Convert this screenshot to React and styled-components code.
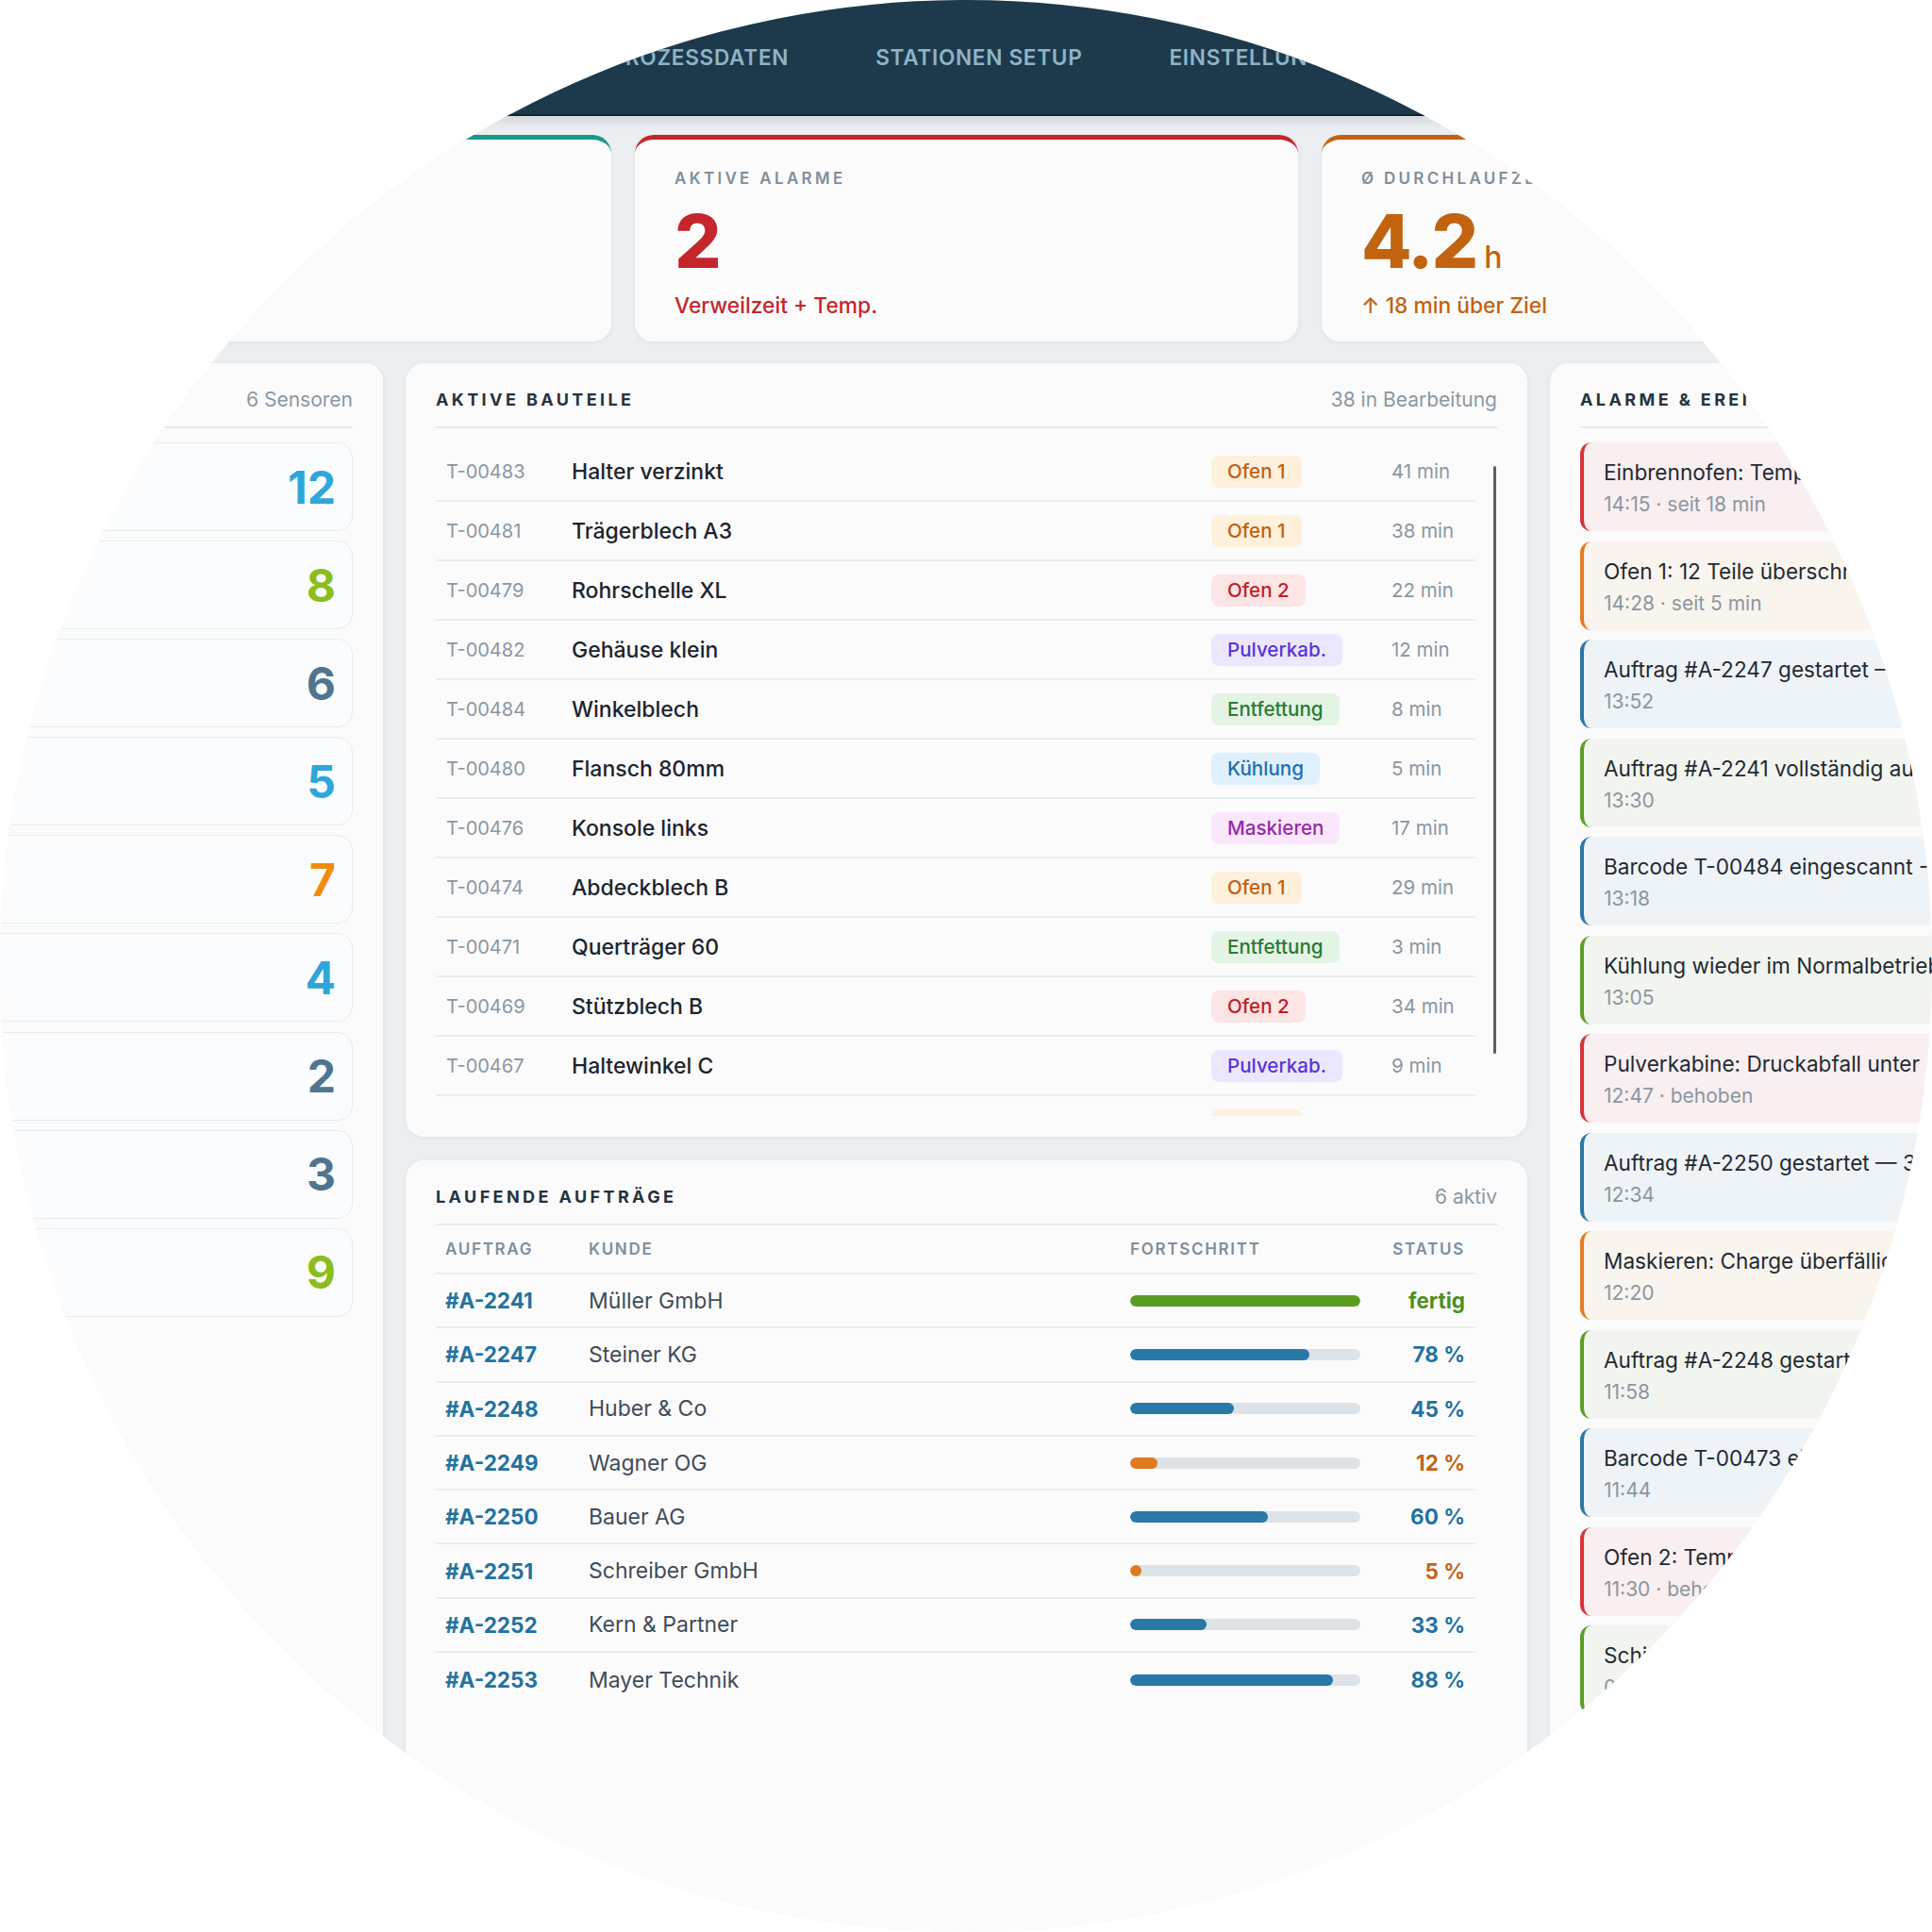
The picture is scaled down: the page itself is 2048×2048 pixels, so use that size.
import React from 'react';
import styled, { createGlobalStyle } from 'styled-components';

const GlobalStyle = createGlobalStyle`
  html, body {
    margin: 0;
    padding: 0;
    background: #ffffff;
  }
  body {
    font-family: Inter, "Noto Sans", sans-serif;
    color: #1f2a33;
  }
  * {
    box-sizing: border-box;
  }
`;

const colors = {
  navy: '#1c3a4b',
  navText: '#8db4c9',
  pageBg: '#eceff2',
  panel: '#fbfbfc',
  line: '#e6eaed',
  title: '#26323c',
  muted: '#8a97a1',
  label: '#7f8e99',
  red: '#c4262c',
  orange: '#c2630f',
  teal: '#17998a',
  blue: '#22729f',
  green: '#4f8e1d'
};

const STAGES = {
  ofen1: { label: 'Ofen 1', bg: '#fff0dc', fg: '#c2600c' },
  ofen2: { label: 'Ofen 2', bg: '#fde5e5', fg: '#bf1d27' },
  pulver: { label: 'Pulverkab.', bg: '#ece7ff', fg: '#5a34d6' },
  entf: { label: 'Entfettung', bg: '#e3f4e5', fg: '#2a7a34' },
  kuehl: { label: 'Kühlung', bg: '#dff0fd', fg: '#1c6fb0' },
  mask: { label: 'Maskieren', bg: '#fbe7fc', fg: '#962aa6' }
};

const TONES = {
  red: { edge: '#d6343a', bg: '#f9eef0' },
  orange: { edge: '#e57c1c', bg: '#faf4ee' },
  blue: { edge: '#2a78a6', bg: '#eef3f7' },
  green: { edge: '#5c9e26', bg: '#f2f5ef' }
};

const BAR = {
  blue: { fill: '#2878a8', text: '#22729f' },
  green: { fill: '#5b9b22', text: '#4f8e1d' },
  orange: { fill: '#e07a1f', text: '#c5641a' }
};

const tabs = ['Übersicht', 'Prozessdaten', 'Stationen Setup', 'Einstellungen'];

const kpis = [
  { label: 'Teile in Linie', value: '38', unit: '', note: '+4 seit Schichtbeginn', color: colors.teal },
  { label: 'Aktive Alarme', value: '2', unit: '', note: 'Verweilzeit + Temp.', color: colors.red },
  { label: 'Ø Durchlaufzeit', value: '4.2', unit: 'h', note: '↑ 18 min über Ziel', color: colors.orange }
];

const sensors = [
  { value: 12, color: '#2fa6da' },
  { value: 8, color: '#8bbd1c' },
  { value: 6, color: '#4f7590' },
  { value: 5, color: '#2fa6da' },
  { value: 7, color: '#f28c0c' },
  { value: 4, color: '#2fa6da' },
  { value: 2, color: '#4f7590' },
  { value: 3, color: '#4f7590' },
  { value: 9, color: '#8bbd1c' }
];

const parts = [
  ['T-00483', 'Halter verzinkt', 'ofen1', 41],
  ['T-00481', 'Trägerblech A3', 'ofen1', 38],
  ['T-00479', 'Rohrschelle XL', 'ofen2', 22],
  ['T-00482', 'Gehäuse klein', 'pulver', 12],
  ['T-00484', 'Winkelblech', 'entf', 8],
  ['T-00480', 'Flansch 80mm', 'kuehl', 5],
  ['T-00476', 'Konsole links', 'mask', 17],
  ['T-00474', 'Abdeckblech B', 'ofen1', 29],
  ['T-00471', 'Querträger 60', 'entf', 3],
  ['T-00469', 'Stützblech B', 'ofen2', 34],
  ['T-00467', 'Haltewinkel C', 'pulver', 9],
  ['T-00466', 'Distanzblech', 'ofen1', 44]
];

const orders = [
  { id: '#A-2241', customer: 'Müller GmbH', progress: 100, tone: 'green' },
  { id: '#A-2247', customer: 'Steiner KG', progress: 78, tone: 'blue' },
  { id: '#A-2248', customer: 'Huber & Co', progress: 45, tone: 'blue' },
  { id: '#A-2249', customer: 'Wagner OG', progress: 12, tone: 'orange' },
  { id: '#A-2250', customer: 'Bauer AG', progress: 60, tone: 'blue' },
  { id: '#A-2251', customer: 'Schreiber GmbH', progress: 5, tone: 'orange' },
  { id: '#A-2252', customer: 'Kern & Partner', progress: 33, tone: 'blue' },
  { id: '#A-2253', customer: 'Mayer Technik', progress: 88, tone: 'blue' }
];

const events = [
  { tone: 'red', text: 'Einbrennofen: Temperatur über Sollwert (218 °C)', meta: '14:15 · seit 18 min' },
  { tone: 'orange', text: 'Ofen 1: 12 Teile überschreiten Verweilzeit', meta: '14:28 · seit 5 min' },
  { tone: 'blue', text: 'Auftrag #A-2247 gestartet – 24 Teile', meta: '13:52' },
  { tone: 'green', text: 'Auftrag #A-2241 vollständig ausgeliefert', meta: '13:30' },
  { tone: 'blue', text: 'Barcode T-00484 eingescannt - Entfettung', meta: '13:18' },
  { tone: 'green', text: 'Kühlung wieder im Normalbetrieb', meta: '13:05' },
  { tone: 'red', text: 'Pulverkabine: Druckabfall unter 4 bar', meta: '12:47 · behoben' },
  { tone: 'blue', text: 'Auftrag #A-2250 gestartet — 30 Teile', meta: '12:34' },
  { tone: 'orange', text: 'Maskieren: Charge überfällig', meta: '12:20' },
  { tone: 'green', text: 'Auftrag #A-2248 gestartet', meta: '11:58' },
  { tone: 'blue', text: 'Barcode T-00473 eingescannt', meta: '11:44' },
  { tone: 'red', text: 'Ofen 2: Temperaturschwankung', meta: '11:30 · behoben' },
  { tone: 'green', text: 'Schichtwechsel abgeschlossen', meta: '06:00' }
];

const App = () => (
  <>
    <GlobalStyle />
    <Viewport>
      <Page>
        <NavBar>
          <Brand>PULVERLINIE</Brand>
          <Tabs>
            {tabs.map(tab => (
              <Tab key={tab}>{tab}</Tab>
            ))}
          </Tabs>
        </NavBar>

        <Main>
          <KpiRow>
            {kpis.map(kpi => (
              <KpiCard key={kpi.label} $accent={kpi.color}>
                <KpiLabel>{kpi.label}</KpiLabel>
                <KpiValue $color={kpi.color}>
                  {kpi.value}
                  {kpi.unit && <KpiUnit>{kpi.unit}</KpiUnit>}
                </KpiValue>
                <KpiNote $color={kpi.color}>{kpi.note}</KpiNote>
              </KpiCard>
            ))}
          </KpiRow>

          <Body>
            <Panel>
              <PanelHeader>
                <PanelTitle>Stationen</PanelTitle>
                <PanelMeta>6 Sensoren</PanelMeta>
              </PanelHeader>
              <SensorList>
                {sensors.map((sensor, i) => (
                  <SensorCard key={i}>
                    <SensorValue $color={sensor.color}>{sensor.value}</SensorValue>
                  </SensorCard>
                ))}
              </SensorList>
            </Panel>

            <CenterColumn>
              <Panel>
                <PanelHeader>
                  <PanelTitle>Aktive Bauteile</PanelTitle>
                  <PanelMeta>38 in Bearbeitung</PanelMeta>
                </PanelHeader>
                <ListFrame>
                  <PartList>
                    {parts.map(([code, name, stage, minutes]) => (
                      <PartRow key={code}>
                        <PartCode>{code}</PartCode>
                        <PartName>{name}</PartName>
                        <div>
                          <Badge $bg={STAGES[stage].bg} $fg={STAGES[stage].fg}>
                            {STAGES[stage].label}
                          </Badge>
                        </div>
                        <PartTime>{minutes} min</PartTime>
                      </PartRow>
                    ))}
                  </PartList>
                  <ScrollThumb />
                </ListFrame>
              </Panel>

              <GrowPanel>
                <PanelHeader>
                  <PanelTitle>Laufende Aufträge</PanelTitle>
                  <PanelMeta>6 aktiv</PanelMeta>
                </PanelHeader>
                <OrderHead>
                  <span>Auftrag</span>
                  <span>Kunde</span>
                  <span>Fortschritt</span>
                  <RightCell>Status</RightCell>
                </OrderHead>
                {orders.map(order => (
                  <OrderRow key={order.id}>
                    <OrderId>{order.id}</OrderId>
                    <Customer>{order.customer}</Customer>
                    <Track>
                      <Fill
                        $color={BAR[order.tone].fill}
                        style={{ width: `${order.progress}%` }}
                      />
                    </Track>
                    <Status $color={BAR[order.tone].text}>
                      {order.progress === 100 ? 'fertig' : `${order.progress} %`}
                    </Status>
                  </OrderRow>
                ))}
              </GrowPanel>
            </CenterColumn>

            <Panel>
              <PanelHeader>
                <PanelTitle>Alarme &amp; Ereignisse</PanelTitle>
                <PanelMeta>heute</PanelMeta>
              </PanelHeader>
              <EventList>
                {events.map((event, i) => (
                  <EventItem key={i} $tone={event.tone}>
                    <EventText>{event.text}</EventText>
                    <EventMeta>{event.meta}</EventMeta>
                  </EventItem>
                ))}
              </EventList>
            </Panel>
          </Body>
        </Main>
      </Page>
    </Viewport>
  </>
);

const Viewport = styled.div`
  width: 2048px;
  height: 2048px;
  overflow: hidden;
  background: ${colors.pageBg};
  clip-path: circle(1024px at 50% 50%);
`;

const Page = styled.div`
  width: 2159px;
  margin-left: -55px;
  display: flex;
  flex-direction: column;
`;

const NavBar = styled.header`
  height: 123px;
  display: flex;
  align-items: center;
  padding: 0 0 0 120px;
  background: ${colors.navy};
  border-bottom: 2px solid #0f222d;
  box-shadow: 0 4px 12px rgba(10, 30, 45, 0.14);
`;

const Brand = styled.div`
  width: 355px;
  font-size: 24px;
  font-weight: 800;
  letter-spacing: 2px;
  color: #ffffff;
`;

const Tabs = styled.nav`
  display: flex;
  gap: 92px;
`;

const Tab = styled.span`
  font-size: 22.6px;
  font-weight: 600;
  letter-spacing: 0.7px;
  text-transform: uppercase;
  color: ${colors.navText};
`;

const Main = styled.main`
  display: flex;
  flex-direction: column;
  gap: 23px;
  padding-top: 20px;
`;

const KpiRow = styled.section`
  display: grid;
  grid-template-columns: repeat(3, 1fr);
  gap: 25px;
`;

const KpiCard = styled.div`
  height: 219px;
  padding: 30px 42px 0;
  background: ${colors.panel};
  border-top: 5px solid ${p => p.$accent};
  border-radius: 20px;
  box-shadow: 0 1px 5px rgba(20, 40, 60, 0.07);
`;

const KpiLabel = styled.div`
  font-size: 17px;
  line-height: 22px;
  font-weight: 600;
  letter-spacing: 3.3px;
  text-transform: uppercase;
  color: ${colors.label};
`;

const KpiValue = styled.div`
  margin-top: 16px;
  height: 80px;
  font-size: 78px;
  line-height: 80px;
  font-weight: 800;
  letter-spacing: -2px;
  color: ${p => p.$color};
`;

const KpiUnit = styled.span`
  margin-left: 8px;
  font-size: 32px;
  line-height: 1;
  font-weight: 500;
  letter-spacing: 0;
`;

const KpiNote = styled.div`
  margin-top: 14px;
  font-size: 22.8px;
  line-height: 28px;
  font-weight: 500;
  color: ${p => p.$color};
`;

const Body = styled.section`
  height: 1700px;
  display: grid;
  grid-template-columns: 461px 1fr 461px;
  gap: 24px;
`;

const Panel = styled.div`
  padding: 28px 32px 22px;
  background: ${colors.panel};
  border-radius: 20px;
  box-shadow: 0 1px 5px rgba(20, 40, 60, 0.07);
`;

const GrowPanel = styled(Panel)`
  flex: 1;
`;

const CenterColumn = styled.div`
  display: flex;
  flex-direction: column;
  gap: 25px;
`;

const PanelHeader = styled.div`
  display: flex;
  justify-content: space-between;
  align-items: center;
  padding-bottom: 17px;
  border-bottom: 2px solid ${colors.line};
`;

const PanelTitle = styled.h2`
  margin: 0;
  font-size: 18px;
  line-height: 22px;
  font-weight: 700;
  letter-spacing: 3.4px;
  text-transform: uppercase;
  color: ${colors.title};
`;

const PanelMeta = styled.span`
  font-size: 21px;
  line-height: 22px;
  color: ${colors.muted};
`;

const SensorList = styled.div`
  display: flex;
  flex-direction: column;
  gap: 10.1px;
  margin-top: 15px;
`;

const EventList = styled(SensorList)`
  gap: 10.5px;
`;

const SensorCard = styled.div`
  height: 94px;
  display: flex;
  align-items: center;
  justify-content: flex-end;
  padding: 0 17px;
  background: #fafcfd;
  border: 1px solid #e5edf2;
  border-radius: 16px;
`;

const SensorValue = styled.span`
  font-size: 48px;
  font-weight: 700;
  color: ${p => p.$color};
`;

const ListFrame = styled.div`
  position: relative;
  margin-top: 15px;
`;

const PartList = styled.div`
  max-height: 714px;
  padding-right: 23px;
  overflow: hidden;
`;

/* scrollbar thumb of the parts list, drawn over its right edge */
const ScrollThumb = styled.div`
  position: absolute;
  top: 25px;
  right: 1px;
  width: 3px;
  height: 623px;
  border-radius: 2px;
  background: #5c5f62;
`;

const PartRow = styled.div`
  height: 63px;
  display: grid;
  grid-template-columns: 133px 1fr 191px 89px;
  align-items: center;
  padding-left: 11px;
  border-bottom: 2px solid #e8ecef;
`;

const PartCode = styled.span`
  font-size: 20px;
  color: ${colors.muted};
`;

const PartName = styled.span`
  font-size: 23px;
  font-weight: 500;
  color: #1b242d;
`;

const Badge = styled.span`
  display: inline-flex;
  align-items: center;
  height: 34px;
  padding: 0 17px;
  border-radius: 8px;
  font-size: 20.6px;
  font-weight: 500;
  background: ${p => p.$bg};
  color: ${p => p.$fg};
`;

const PartTime = styled.span`
  font-size: 20.5px;
  color: ${colors.muted};
`;

const orderColumns = `
  display: grid;
  grid-template-columns: 152px 1fr 244px 111px;
  align-items: center;
  padding: 0 11px 0 10px;
  margin-right: 23px;
`;

const OrderHead = styled.div`
  ${orderColumns}
  height: 52px;
  border-bottom: 2px solid #e8ecef;
  font-size: 17px;
  font-weight: 600;
  letter-spacing: 1.7px;
  text-transform: uppercase;
  color: ${colors.label};
`;

const RightCell = styled.span`
  text-align: right;
`;

const OrderRow = styled.div`
  ${orderColumns}
  height: 57.3px;
  border-bottom: 2px solid #e8ecef;

  &:last-child {
    border-bottom: none;
  }
`;

const OrderId = styled.span`
  font-size: 22.5px;
  font-weight: 700;
  color: ${colors.blue};
`;

const Customer = styled.span`
  font-size: 23px;
  color: #3f4c57;
`;

const Track = styled.div`
  height: 12px;
  border-radius: 6px;
  background: #dde2e6;
  overflow: hidden;
`;

const Fill = styled.div`
  height: 100%;
  border-radius: 6px;
  background: ${p => p.$color};
`;

const Status = styled.span`
  text-align: right;
  font-size: 22.5px;
  font-weight: 700;
  color: ${p => p.$color};
`;

const EventItem = styled.div`
  height: 94px;
  padding: 19px 20px 0 21px;
  border-left: 4px solid ${p => TONES[p.$tone].edge};
  border-radius: 12px;
  background: ${p => TONES[p.$tone].bg};
  overflow: hidden;
`;

const EventText = styled.div`
  font-size: 22.6px;
  line-height: 26px;
  color: #1f2a33;
  white-space: nowrap;
  overflow: hidden;
`;

const EventMeta = styled.div`
  margin-top: 8px;
  font-size: 21px;
  line-height: 26px;
  color: ${colors.muted};
`;

export default App;
